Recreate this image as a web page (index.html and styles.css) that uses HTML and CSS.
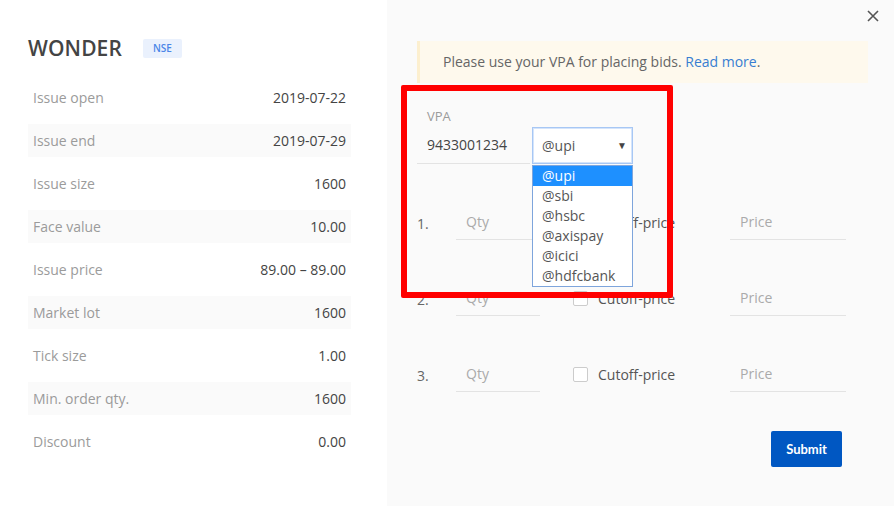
FILE: index.html
```html
<!DOCTYPE html>
<html>

<head>
  <title>Bid - WONDER</title>
  <meta charset="UTF-8">
  <link rel="stylesheet" href="styles.css">
</head>

<body>
  <div class="modal">

    <div class="infoPanel">
      <div class="header">
        <h2 class="symbol">WONDER</h2>
        <span class="exchange">NSE</span>
      </div>
      <div class="infoRow"><span class="label">Issue open</span><span class="value">2019-07-22</span></div>
      <div class="infoRow"><span class="label">Issue end</span><span class="value">2019-07-29</span></div>
      <div class="infoRow"><span class="label">Issue size</span><span class="value">1600</span></div>
      <div class="infoRow"><span class="label">Face value</span><span class="value">10.00</span></div>
      <div class="infoRow"><span class="label">Issue price</span><span class="value">89.00 – 89.00</span></div>
      <div class="infoRow"><span class="label">Market lot</span><span class="value">1600</span></div>
      <div class="infoRow"><span class="label">Tick size</span><span class="value">1.00</span></div>
      <div class="infoRow"><span class="label">Min. order qty.</span><span class="value">1600</span></div>
      <div class="infoRow"><span class="label">Discount</span><span class="value">0.00</span></div>
    </div>

    <div class="bidPanel">
      <a class="close" title="Close">
        <svg width="12" height="12" viewBox="0 0 12 12"><path d="M1 1L11 11M11 1L1 11" stroke="#555" stroke-width="1.6" /></svg>
      </a>

      <div class="notice">
        Please use your VPA for placing bids. <a class="link">Read more</a>.
      </div>

      <div class="vpaRow">
        <div class="vpaField">
          <label>VPA</label>
          <div class="vpaInput">9433001234</div>
        </div>
        <div class="selectWrap">
          <div class="select">@upi <span class="arrow">▼</span></div>
          <ul class="options">
            <li class="active">@upi</li>
            <li>@sbi</li>
            <li>@hsbc</li>
            <li>@axispay</li>
            <li>@icici</li>
            <li>@hdfcbank</li>
          </ul>
        </div>
      </div>

      <div class="bids">
        <div class="bidRow">
          <span class="num">1.</span>
          <div class="field qty">Qty</div>
          <label class="cutoff"><span class="box"></span>Cutoff-price</label>
          <div class="field price">Price</div>
        </div>
        <div class="bidRow">
          <span class="num">2.</span>
          <div class="field qty">Qty</div>
          <label class="cutoff"><span class="box"></span>Cutoff-price</label>
          <div class="field price">Price</div>
        </div>
        <div class="bidRow">
          <span class="num">3.</span>
          <div class="field qty">Qty</div>
          <label class="cutoff"><span class="box"></span>Cutoff-price</label>
          <div class="field price">Price</div>
        </div>
        <div class="actions">
          <button class="submit">Submit</button>
        </div>
      </div>
    </div>

    <!-- highlight drawn over the screenshot -->
    <div class="highlight"></div>
  </div>
</body>

</html>
```

FILE: styles.css
```css
body {
  margin: 0;
  font-family: "Open Sans", "Liberation Sans", sans-serif;
  font-size: 14px;
  color: #444;
}

.modal {
  position: relative;
  display: flex;
  width: 894px;
  height: 506px;
  overflow: hidden;
}

/* left side */
.infoPanel {
  width: 323px;
  padding: 36px 36px 0 28px;
  background: #fff;
}

.header {
  display: flex;
  align-items: center;
  height: 24px;
  margin-bottom: 21px;
}

.symbol {
  margin: 0;
  font-size: 21px;
  font-weight: 600;
  color: #444;
  letter-spacing: 0.1px;
}

.exchange {
  margin-left: 21px;
  padding: 0 10px;
  height: 19px;
  line-height: 19px;
  background: #eaf1fd;
  border-radius: 2px;
  color: #4a86e8;
  font-size: 10px;
  font-weight: 600;
}

.infoRow {
  display: flex;
  justify-content: space-between;
  align-items: center;
  height: 33px;
  margin-bottom: 10px;
  padding: 0 5px;
}

.infoRow:nth-child(odd) {
  background: #fafafa;
}

.infoRow .label {
  color: #9b9b9b;
}

.infoRow .value {
  color: #444;
}

/* right side */
.bidPanel {
  position: relative;
  flex: 1;
  background: #fafafa;
  padding: 41px 26px 0 30px;
}

.close {
  position: absolute;
  top: 10px;
  right: 15px;
  line-height: 0;
}

.notice {
  height: 42px;
  line-height: 42px;
  padding-left: 23px;
  background: #fef9ed;
  border-left: 3px solid #fcefcf;
  color: #666;
}

.link {
  color: #387ed1;
}

.vpaRow {
  display: flex;
  align-items: flex-end;
  margin-top: 23px;
}

.vpaField {
  width: 93px;
  padding: 0 10px;
  border-bottom: 1px solid #e3e3e3;
}

.vpaField label {
  display: block;
  line-height: 20px;
  font-size: 13px;
  color: #9b9b9b;
}

.vpaInput {
  height: 37px;
  line-height: 37px;
  color: #444;
}

.selectWrap {
  position: relative;
  margin-left: 2px;
}

.select {
  box-sizing: border-box;
  width: 101px;
  height: 37px;
  line-height: 35px;
  padding-left: 9px;
  border: 1px solid #a7c7f4;
  box-shadow: 0 0 0 1px #d4e4fb inset;
  background: #fff;
  color: #555;
}

.arrow {
  position: absolute;
  right: 6px;
  top: 1px;
  font-size: 10px;
  color: #444;
}

.options {
  position: absolute;
  top: 38px;
  left: 0;
  margin: 0;
  padding: 0;
  list-style: none;
  width: 99px;
  border: 1px solid #7ea5dc;
  background: #fff;
}

.options li {
  height: 20px;
  line-height: 20px;
  padding-left: 9px;
  color: #555;
}

.options li.active {
  background: #1e90ff;
  color: #fff;
}

.bids {
  width: 429px;
  margin-top: 40px;
}

.bidRow {
  display: flex;
  align-items: center;
  height: 36px;
  margin-bottom: 40px;
}

.num {
  width: 39px;
  padding-top: 2px;
  color: #666;
}

.field {
  box-sizing: border-box;
  height: 36px;
  line-height: 36px;
  padding-left: 10px;
  border-bottom: 1px solid #e3e3e3;
  color: #aaa;
}

.qty {
  width: 84px;
}

.cutoff {
  display: flex;
  align-items: center;
  width: 157px;
  margin-left: 33px;
  color: #555;
}

.box {
  width: 13px;
  height: 13px;
  margin-right: 10px;
  border: 1px solid #ccc;
  border-radius: 2px;
  background: #fff;
}

.price {
  width: 116px;
}

.actions {
  display: flex;
  justify-content: flex-end;
  margin-top: -1px;
  padding-right: 4px;
}

.submit {
  width: 71px;
  height: 36px;
  border: none;
  border-radius: 2px;
  background: #0057c2;
  color: #fff;
  font-family: Lato, "Liberation Sans", sans-serif;
  font-size: 13px;
  font-weight: bold;
}

.highlight {
  position: absolute;
  left: 401px;
  top: 85px;
  width: 260px;
  height: 201px;
  border: 6px solid #f00;
  border-radius: 2px;
}
```
